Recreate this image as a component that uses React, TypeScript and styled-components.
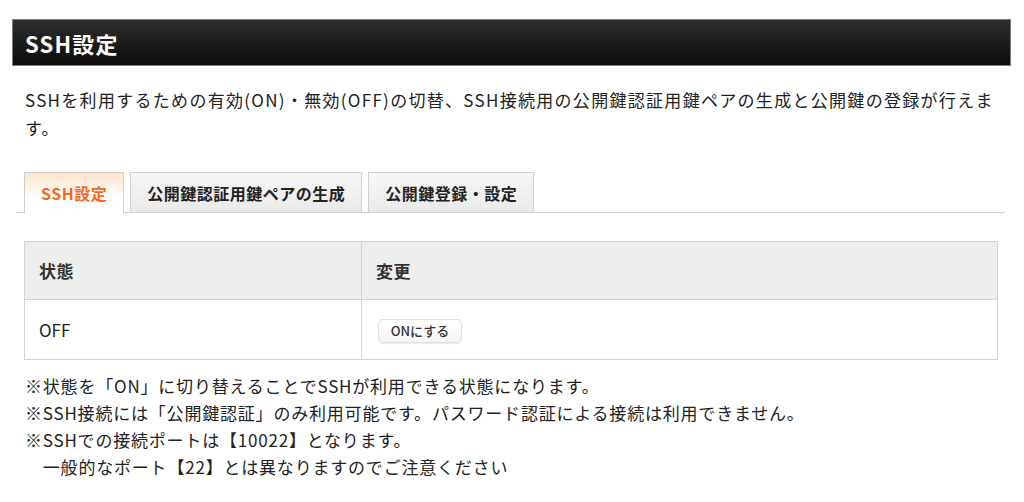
import styled, { createGlobalStyle } from "styled-components";

const GlobalStyle = createGlobalStyle`
    html, body {
        margin:0;
        padding:0;
        background:#fff;
    }
    body {
        font-family:"Noto Sans CJK JP", "Noto Sans", sans-serif;
        color:#222;
    }
`;

const Page = styled.div`
    width:1024px;
    box-sizing:border-box;
    padding:19px 13px 0 12px;
`;

const TitleBar = styled.div`
    height:47px;
    box-sizing:border-box;
    border:1.5px solid #7c7c7c;
    background:linear-gradient(#2e2e2e, #0c0c0c);
    display:flex;
    align-items:center;
    padding-left:12px;
    h1{
        margin:0;
        font-size:22px;
        font-weight:bold;
        letter-spacing:1.2px;
        color:#fff;
    }
`;

const Lead = styled.p`
    margin:20px 16px 0 13px;
    font-size:17px;
    line-height:28px;
    letter-spacing:1.3px;
`;

const TabBar = styled.div`
    margin:30px 6px 0 4px;
    padding-left:8px;
    display:flex;
    gap:6px;
    border-bottom:1.5px solid #d2d2d2;
`;

const Tab = styled.div<{ $active?: boolean }>`
    box-sizing:border-box;
    padding:0 ${p => p.$active ? 16 : 16}px;
    display:flex;
    align-items:center;
    border:1px solid #cfcfcf;
    border-bottom:none;
    margin-bottom:${p => p.$active ? "-1.5px" : "0"};
    height:${p => p.$active ? "41.5px" : "40px"};
    background:${p => p.$active
        ? "linear-gradient(#fde3cb, #ffffff 60%)"
        : "linear-gradient(#f7f7f7, #e9e9e9)"};
    font-size:16px;
    font-weight:bold;
    letter-spacing:0.5px;
    color:${p => p.$active ? "#f2691f" : "#222"};
`;

const Table = styled.table`
    margin:28px 13px 0 12px;
    width:974px;
    border-collapse:collapse;
    th, td{
        border:1.5px solid #d3d3d3;
        text-align:left;
        padding:0 0 0 14px;
        font-size:17px;
    }
    th{
        height:57px;
        background:#eeeeee;
        font-weight:bold;
        color:#333;
        letter-spacing:0.5px;
    }
    td{
        height:59px;
    }
    th:first-child{
        width:322px;
    }
`;

const Button = styled.button`
    height:24px;
    width:84px;
    padding:0;
    font-family:inherit;
    font-size:13px;
    font-weight:500;
    color:#333;
    background:linear-gradient(#ffffff, #f6f6f6);
    border:1px solid #dedede;
    border-radius:5px;
    box-shadow:0 1px 1px rgba(0,0,0,0.08);
    margin-left:2px;
`;

const Notes = styled.div`
    margin:12px 0 0 13px;
    p{
        margin:0;
        font-size:17px;
        line-height:27px;
        letter-spacing:0.8px;
    }
`;

const App = () => {
    return (
        <>
            <GlobalStyle />
            <Page>
                <TitleBar><h1>SSH設定</h1></TitleBar>
                <Lead>SSHを利用するための有効(ON)・無効(OFF)の切替、SSH接続用の公開鍵認証用鍵ペアの生成と公開鍵の登録が行えます。</Lead>
                <TabBar>
                    <Tab $active>SSH設定</Tab>
                    <Tab>公開鍵認証用鍵ペアの生成</Tab>
                    <Tab>公開鍵登録・設定</Tab>
                </TabBar>
                <Table>
                    <thead>
                        <tr>
                            <th>状態</th>
                            <th>変更</th>
                        </tr>
                    </thead>
                    <tbody>
                        <tr>
                            <td>OFF</td>
                            <td><Button>ONにする</Button></td>
                        </tr>
                    </tbody>
                </Table>
                <Notes>
                    <p>※状態を「ON」に切り替えることでSSHが利用できる状態になります。</p>
                    <p>※SSH接続には「公開鍵認証」のみ利用可能です。パスワード認証による接続は利用できません。</p>
                    <p>※SSHでの接続ポートは【10022】となります。</p>
                    <p>　一般的なポート【22】とは異なりますのでご注意ください</p>
                </Notes>
            </Page>
        </>
    )
};

export default App;
